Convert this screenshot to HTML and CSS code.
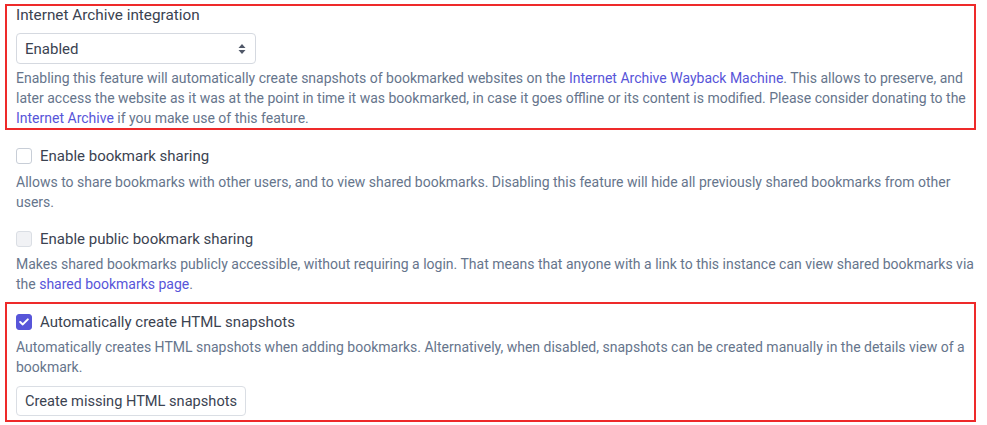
FILE: index.html
```html
<!DOCTYPE html>
<html lang="en">
<head>
<meta charset="utf-8">
<title>Settings</title>
<link rel="stylesheet" href="styles.css">
</head>
<body>
<div class="settings">
  <div class="group highlight first">
    <label class="form-label" for="ia">Internet Archive integration</label>
    <div class="select" id="ia">
      <span>Enabled</span>
      <svg class="caret" width="8" height="12" viewBox="0 0 8 12"><path d="M4 1 L7.5 5 H0.5 Z M4 11 L7.5 7 H0.5 Z" fill="#505868"/></svg>
    </div>
    <div class="hint">Enabling this feature will automatically create snapshots of bookmarked websites on the <a href="#">Internet Archive Wayback Machine</a>. This allows to preserve, and later access the website as it was at the point in time it was bookmarked, in case it goes offline or its content is modified. Please consider donating to the <a href="#">Internet Archive</a> if you make use of this feature.</div>
  </div>

  <div class="group g-share">
    <label class="checkbox"><span class="box"></span>Enable bookmark sharing</label>
    <div class="hint">Allows to share bookmarks with other users, and to view shared bookmarks. Disabling this feature will hide all previously shared bookmarks from other users.</div>
  </div>

  <div class="group g-public">
    <label class="checkbox"><span class="box disabled"></span>Enable public bookmark sharing</label>
    <div class="hint">Makes shared bookmarks publicly accessible, without requiring a login. That means that anyone with a link to this instance can view shared bookmarks via the <a href="#">shared bookmarks page</a>.</div>
  </div>

  <div class="group highlight last">
    <label class="checkbox"><span class="box checked"><svg width="10" height="8" viewBox="0 0 10 8"><path d="M1.2 4 L3.8 6.4 L8.8 1.4" fill="none" stroke="#fff" stroke-width="2" stroke-linecap="round" stroke-linejoin="round"/></svg></span>Automatically create HTML snapshots</label>
    <div class="hint">Automatically creates HTML snapshots when adding bookmarks. Alternatively, when disabled, snapshots can be created manually in the details view of a bookmark.</div>
    <button class="btn" type="button">Create missing HTML snapshots</button>
  </div>
</div>
</body>
</html>
```
FILE: styles.css
```css
html, body {
  margin: 0;
  padding: 0;
  background: #fff;
}
body {
  font-family: Roboto, "Noto Sans", "Liberation Sans", sans-serif;
  color: #3b4351;
}
.settings {
  padding: 4px 11px 0 16px;
}
.group {
  display: flex;
  flex-direction: column;
  align-items: flex-start;
}
.highlight {
  border: 2px solid #ee2a2a;
  margin-left: -11px;
  padding-left: 9px;
}
.first {
  padding-top: 0;
  padding-bottom: 0;
}
.last {
  margin-top: 8px;
  padding-top: 8px;
  padding-bottom: 4px;
}
.g-share {
  margin-top: 16px;
}
.g-public {
  margin-top: 17px;
}
.form-label {
  font-size: 15.3px;
  line-height: 20px;
  margin-top: -1px;
  margin-bottom: 1px;
}
.select {
  margin-top: 7px;
  box-sizing: border-box;
  width: 240px;
  height: 31px;
  border: 1px solid #d5d9e0;
  border-radius: 4px;
  display: flex;
  align-items: center;
  justify-content: space-between;
  padding: 0 9px 0 8px;
  font-size: 15px;
}
.hint {
  margin-top: 4px;
  font-size: 14px;
  line-height: 20px;
  color: #66758c;
  align-self: stretch;
}
.g-share .hint { margin-top: 6px; }
.g-public .hint { margin-top: 5px; }
.last .hint { margin-top: 5px; }
.hint a {
  color: #5755d9;
  text-decoration: none;
}
.checkbox {
  display: flex;
  align-items: center;
  font-size: 15px;
  line-height: 20px;
}
.box {
  box-sizing: border-box;
  width: 16px;
  height: 16px;
  border: 1px solid #c8ced7;
  border-radius: 3px;
  background: #fff;
  margin-right: 8px;
  display: flex;
  align-items: center;
  justify-content: center;
}
.box.disabled {
  background: #f1f2f5;
  border-color: #dadee4;
}
.box.checked {
  background: #5755d9;
  border-color: #5755d9;
}
.btn {
  margin-top: 9px;
  height: 30px;
  padding: 0 8px;
  border: 1px solid #dadee4;
  border-radius: 4px;
  background: #fff;
  color: #3b4351;
  font-family: inherit;
  font-size: 14.6px;
}
```
